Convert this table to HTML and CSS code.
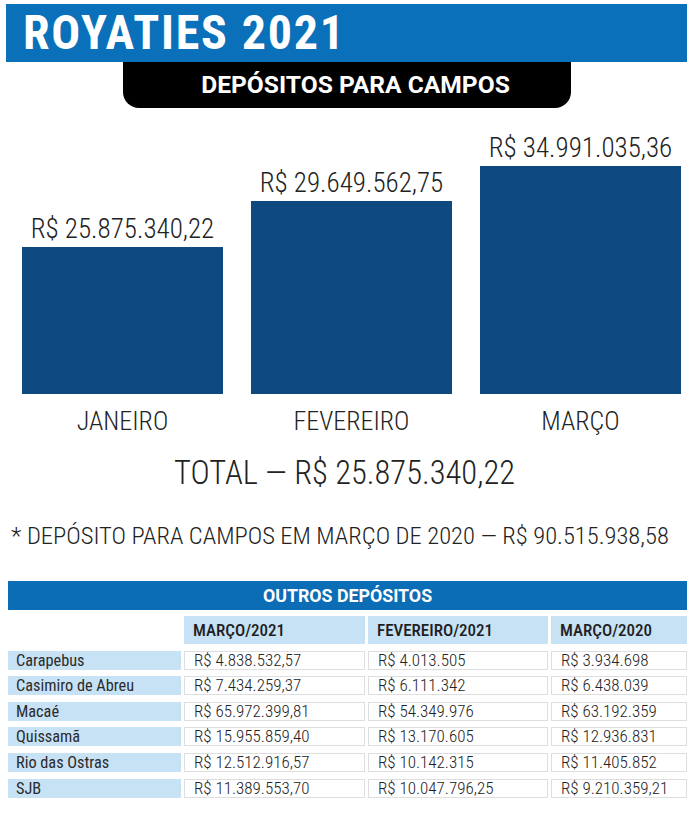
FILE: index.html
```html
<!DOCTYPE html>
<html lang="pt-BR">
<head>
<meta charset="utf-8">
<title>Royaties 2021</title>
<link rel="stylesheet" href="styles.css">
</head>
<body>
<div class="page">
  <header class="banner">
    <h1 class="banner-title">ROYATIES 2021</h1>
  </header>
  <div class="tab"><span class="tab-title">DEPÓSITOS PARA CAMPOS</span></div>

  <section class="chart">
    <div class="col">
      <div class="bar-value">R$ 25.875.340,22</div>
      <div class="bar" style="height:147px"></div>
    </div>
    <div class="col">
      <div class="bar-value">R$ 29.649.562,75</div>
      <div class="bar" style="height:193px"></div>
    </div>
    <div class="col">
      <div class="bar-value">R$ 34.991.035,36</div>
      <div class="bar" style="height:228px"></div>
    </div>
  </section>
  <div class="months">
    <div class="month">JANEIRO</div>
    <div class="month">FEVEREIRO</div>
    <div class="month">MARÇO</div>
  </div>

  <p class="total">TOTAL — R$ 25.875.340,22</p>
  <p class="note">* DEPÓSITO PARA CAMPOS EM MARÇO DE 2020 — R$ 90.515.938,58</p>

  <section class="table">
    <div class="table-title">OUTROS DEPÓSITOS</div>
    <div class="grid">
      <div class="blank"></div>
      <div class="head">MARÇO/2021</div>
      <div class="head">FEVEREIRO/2021</div>
      <div class="head">MARÇO/2020</div>

      <div class="name">Carapebus</div>
      <div class="val">R$ 4.838.532,57</div>
      <div class="val">R$ 4.013.505</div>
      <div class="val">R$ 3.934.698</div>

      <div class="name">Casimiro de Abreu</div>
      <div class="val">R$ 7.434.259,37</div>
      <div class="val">R$ 6.111.342</div>
      <div class="val">R$ 6.438.039</div>

      <div class="name">Macaé</div>
      <div class="val">R$ 65.972.399,81</div>
      <div class="val">R$ 54.349.976</div>
      <div class="val">R$ 63.192.359</div>

      <div class="name">Quissamã</div>
      <div class="val">R$ 15.955.859,40</div>
      <div class="val">R$ 13.170.605</div>
      <div class="val">R$ 12.936.831</div>

      <div class="name">Rio das Ostras</div>
      <div class="val">R$ 12.512.916,57</div>
      <div class="val">R$ 10.142.315</div>
      <div class="val">R$ 11.405.852</div>

      <div class="name">SJB</div>
      <div class="val">R$ 11.389.553,70</div>
      <div class="val">R$ 10.047.796,25</div>
      <div class="val">R$ 9.210.359,21</div>
    </div>
  </section>
</div>
</body>
</html>
```
FILE: styles.css
```css
html, body {
  margin: 0;
  padding: 0;
  background: #ffffff;
}

.page {
  width: 689px;
  font-family: "Roboto", "DejaVu Sans Condensed", sans-serif;
  font-stretch: 75%;
  font-weight: 300;
  color: #222222;
  padding-top: 4px;
}

.banner {
  margin-left: 6px;
  width: 681px;
  height: 58px;
  background: #0a70ba;
  display: flex;
  align-items: center;
  padding-left: 17px;
  box-sizing: border-box;
}

.banner-title {
  margin: 0;
  font-size: 48px;
  font-weight: 700;
  letter-spacing: 1.8px;
  color: #ffffff;
  line-height: 58px;
}

.tab {
  margin-left: 123px;
  width: 448px;
  height: 46px;
  background: #000000;
  border-radius: 0 0 16px 16px;
  display: flex;
  justify-content: center;
  align-items: center;
  padding-left: 17px;
  box-sizing: border-box;
}

.tab-title {
  font-stretch: 88%;
  color: #ffffff;
  font-size: 24.6px;
  font-weight: 700;
  line-height: 46px;
}

.chart {
  display: flex;
  align-items: flex-end;
  gap: 28px;
  padding-left: 22px;
  margin-top: 25px;
}

.col {
  width: 201px;
  display: flex;
  flex-direction: column;
  align-items: center;
}

.bar-value {
  font-size: 27px;
  line-height: 30px;
  margin-bottom: 3px;
  white-space: nowrap;
}

.bar {
  width: 201px;
  background: #0e4a7f;
}

.months {
  display: flex;
  gap: 28px;
  padding-left: 22px;
  margin-top: 12px;
}

.month {
  width: 201px;
  text-align: center;
  font-size: 26px;
  line-height: 30px;
}

.total {
  margin: 17px 0 0;
  text-align: center;
  font-size: 32.5px;
  line-height: 40px;
}

.note {
  margin: 29px 0 0;
  padding-left: 11px;
  font-size: 24.5px;
  line-height: 28px;
  white-space: nowrap;
}

.table {
  margin: 31px 0 0 8px;
  width: 679px;
}

.table-title {
  height: 29px;
  background: #0b6db6;
  color: #ffffff;
  font-stretch: 88%;
  font-size: 17.8px;
  font-weight: 700;
  text-align: center;
  line-height: 29px;
}

.grid {
  margin-top: 6px;
  display: grid;
  grid-template-columns: 173px 181px 180px 136px;
  grid-template-rows: 28px;
  grid-auto-rows: 19px;
  column-gap: 3px;
  row-gap: 6.6px;
}

.head {
  background: #c7e1f5;
  font-size: 17px;
  font-weight: 500;
  line-height: 28px;
  padding-left: 9px;
  color: #1f1f1f;
}

.name {
  background: #c7e1f5;
  font-size: 16.3px;
  font-weight: 400;
  line-height: 19px;
  padding-left: 8px;
  color: #2b2b2b;
}

.val {
  border: 1px solid #dedede;
  box-sizing: border-box;
  font-size: 17px;
  line-height: 17px;
  padding-left: 9px;
  color: #222222;
  white-space: nowrap;
}
```
